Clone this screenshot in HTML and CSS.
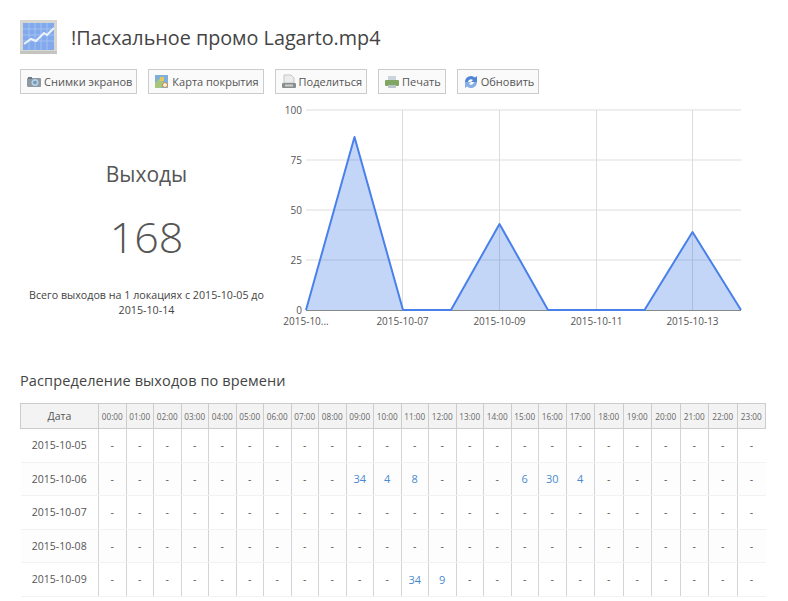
FILE: index.html
```html
<!DOCTYPE html>
<html lang="en">
<head>
    <meta charset="UTF-8">
    <meta name="viewport" content="width=device-width, initial-scale=1.0">
    <title>!Пасхальное промо Lagarto.mp4</title>
    <link rel="stylesheet" href="styles.css">
</head>
<body>
    <div class="title-row">
        <svg class="title-icon" width="37" height="34" viewBox="0 0 37 34">
            <rect x="0" y="0" width="37" height="34" fill="#d6d6d2"/>
            <rect x="3" y="3" width="31" height="27" fill="#82a9ec"/>
            <path d="M9 3V30M15 3V30M21 3V30M27 3V30M3 9H34M3 15H34M3 21H34" stroke="#a4c1f2" stroke-width="1" fill="none"/>
            <path d="M4 24L11 19L16 21L24 13L27 15L34 8" stroke="#eef3fb" stroke-width="2" fill="none"/>
            <rect x="0" y="31" width="37" height="3" fill="#c4c4c0"/>
        </svg>
        <h1 class="page-title">!Пасхальное промо Lagarto.mp4</h1>
    </div>

    <div class="toolbar">
        <button class="tool-btn" type="button">
            <svg width="16" height="16" viewBox="0 0 16 16"><rect x="1" y="4" width="14" height="9" rx="1" fill="#8d9aa4"/><rect x="2" y="3" width="4" height="2" fill="#6f7b84"/><circle cx="9" cy="8.500" r="3.500" fill="#b5cee2"/><circle cx="9" cy="8.500" r="1.800" fill="#6f98b9"/></svg>
            Снимки экранов
        </button>
        <button class="tool-btn" type="button">
            <svg width="16" height="16" viewBox="0 0 16 16"><rect x="1" y="1" width="13" height="13" fill="#7fb0dc"/><path d="M1 9L6 4L10 9L7 14H1Z" fill="#a8c67c"/><rect x="6" y="3" width="4" height="4" fill="#e4c65c"/><circle cx="11" cy="11" r="2.500" fill="#f4f0e0" stroke="#c98a3a" stroke-width="1"/></svg>
            Карта покрытия
        </button>
        <button class="tool-btn" type="button">
            <svg width="16" height="16" viewBox="0 0 16 16"><path d="M3 1H10L13 4V9H3Z" fill="#ececec" stroke="#c4c4c4" stroke-width="1"/><rect x="1" y="9" width="14" height="5" rx="1" fill="#8a8e8e"/><rect x="4" y="10.500" width="8" height="2" fill="#cfcfcf"/></svg>
            Поделиться
        </button>
        <button class="tool-btn" type="button">
            <svg width="16" height="16" viewBox="0 0 16 16"><rect x="4" y="2" width="8" height="5" fill="#c9d4dc"/><rect x="1" y="6" width="14" height="6" rx="1" fill="#7fa663"/><rect x="4" y="11" width="8" height="3" fill="#b8c4ca"/></svg>
            Печать
        </button>
        <button class="tool-btn" type="button">
            <svg width="16" height="16" viewBox="0 0 16 16"><path d="M2 8A6 6 0 0 1 12 3.500L14 2V8H8L10 6A3 3 0 0 0 5 8Z" fill="#4f86d6"/><path d="M14 8A6 6 0 0 1 4 12.500L2 14V8H8L6 10A3 3 0 0 0 11 8Z" fill="#86aee6"/></svg>
            Обновить
        </button>
    </div>

    <div class="summary">
        <div class="stat">
            <div class="stat-label">Выходы</div>
            <div class="stat-value">168</div>
            <p class="stat-note">Всего выходов на 1 локациях с 2015-10-05 до 2015-10-14</p>
        </div>
        <svg class="chart" width="492" height="240" viewBox="274 100 492 240">
            <g class="grid-h">
                <line x1="306" y1="110" x2="741" y2="110"/>
                <line x1="306" y1="160" x2="741" y2="160"/>
                <line x1="306" y1="210" x2="741" y2="210"/>
                <line x1="306" y1="260" x2="741" y2="260"/>
            </g>
            <g class="grid-v">
                <line x1="402.500" y1="110" x2="402.500" y2="310"/>
                <line x1="499.500" y1="110" x2="499.500" y2="310"/>
                <line x1="596.500" y1="110" x2="596.500" y2="310"/>
                <line x1="692.500" y1="110" x2="692.500" y2="310"/>
            </g>
            <path class="area" d="M306 310L354.500 137L403 310L451 310L499.500 224L548 310L644.500 310L692.500 232L741 310Z"/>
            <line class="baseline" x1="306" y1="310.500" x2="741" y2="310.500"/>
            <path class="line" d="M306 310L354.500 137L403 310L451 310L499.500 224L548 310L644.500 310L692.500 232L741 310"/>
            <g class="y-labels">
                <text x="302" y="113.500">100</text>
                <text x="302" y="163.500">75</text>
                <text x="302" y="213.500">50</text>
                <text x="302" y="263.500">25</text>
                <text x="302" y="313.500">0</text>
            </g>
            <g class="x-labels">
                <text x="306" y="325">2015-10...</text>
                <text x="402.500" y="325">2015-10-07</text>
                <text x="499.500" y="325">2015-10-09</text>
                <text x="596.500" y="325">2015-10-11</text>
                <text x="692.500" y="325">2015-10-13</text>
            </g>
        </svg>
    </div>

    <h2 class="section-title">Распределение выходов по времени</h2>

    <table class="hours">
        <thead>
            <tr>
                <th class="date-col">Дата</th>
                <th>00:00</th><th>01:00</th><th>02:00</th><th>03:00</th><th>04:00</th><th>05:00</th><th>06:00</th><th>07:00</th><th>08:00</th><th>09:00</th><th>10:00</th><th>11:00</th><th>12:00</th><th>13:00</th><th>14:00</th><th>15:00</th><th>16:00</th><th>17:00</th><th>18:00</th><th>19:00</th><th>20:00</th><th>21:00</th><th>22:00</th><th>23:00</th>
            </tr>
        </thead>
        <tbody>
            <tr>
                <td>2015-10-05</td>
                <td>-</td><td>-</td><td>-</td><td>-</td><td>-</td><td>-</td><td>-</td><td>-</td><td>-</td><td>-</td><td>-</td><td>-</td><td>-</td><td>-</td><td>-</td><td>-</td><td>-</td><td>-</td><td>-</td><td>-</td><td>-</td><td>-</td><td>-</td><td>-</td>
            </tr>
            <tr>
                <td>2015-10-06</td>
                <td>-</td><td>-</td><td>-</td><td>-</td><td>-</td><td>-</td><td>-</td><td>-</td><td>-</td><td class="val">34</td><td class="val">4</td><td class="val">8</td><td>-</td><td>-</td><td>-</td><td class="val">6</td><td class="val">30</td><td class="val">4</td><td>-</td><td>-</td><td>-</td><td>-</td><td>-</td><td>-</td>
            </tr>
            <tr>
                <td>2015-10-07</td>
                <td>-</td><td>-</td><td>-</td><td>-</td><td>-</td><td>-</td><td>-</td><td>-</td><td>-</td><td>-</td><td>-</td><td>-</td><td>-</td><td>-</td><td>-</td><td>-</td><td>-</td><td>-</td><td>-</td><td>-</td><td>-</td><td>-</td><td>-</td><td>-</td>
            </tr>
            <tr>
                <td>2015-10-08</td>
                <td>-</td><td>-</td><td>-</td><td>-</td><td>-</td><td>-</td><td>-</td><td>-</td><td>-</td><td>-</td><td>-</td><td>-</td><td>-</td><td>-</td><td>-</td><td>-</td><td>-</td><td>-</td><td>-</td><td>-</td><td>-</td><td>-</td><td>-</td><td>-</td>
            </tr>
            <tr>
                <td>2015-10-09</td>
                <td>-</td><td>-</td><td>-</td><td>-</td><td>-</td><td>-</td><td>-</td><td>-</td><td>-</td><td>-</td><td>-</td><td class="val">34</td><td class="val">9</td><td>-</td><td>-</td><td>-</td><td>-</td><td>-</td><td>-</td><td>-</td><td>-</td><td>-</td><td>-</td><td>-</td>
            </tr>
        </tbody>
    </table>
</body>
</html>
```

FILE: styles.css
```css
body {
    font-family: 'Open Sans', sans-serif;
    background-color: #fff;
    color: #555;
    margin: 0;
    padding: 20px 22px 0 20px;
    height: 581px;
    overflow: hidden;
}

.title-row {
    display: flex;
    align-items: center;
    height: 34px;
}

.title-icon {
    margin-right: 14px;
}

.page-title {
    margin: 0;
    font-size: 19.75px;
    font-weight: 400;
    color: #444;
}

.toolbar {
    display: flex;
    gap: 11px;
    margin-top: 15px;
}

.tool-btn {
    display: flex;
    align-items: center;
    gap: 2px;
    height: 25px;
    padding: 0 4px 0 5px;
    box-sizing: border-box;
    background-color: #fafafa;
    border: 1px solid #ccc;
    font-family: 'Open Sans', sans-serif;
    font-size: 11px;
    color: #555;
}

.summary {
    display: flex;
    height: 240px;
    margin-top: 6px;
}

.stat {
    width: 253px;
    text-align: center;
}

.stat-label {
    margin-top: 59px;
    font-size: 21px;
    line-height: 30px;
    color: #555;
}

.stat-value {
    margin-top: 18px;
    font-size: 43px;
    font-weight: 300;
    line-height: 60px;
    color: #555;
}

.stat-note {
    margin: 21px 0 0;
    font-size: 10.7px;
    line-height: 15px;
    color: #444;
}

.chart {
    display: block;
    margin-left: 1px;
}

.chart text {
    font-family: 'Open Sans', sans-serif;
    font-size: 10px;
    fill: #555;
}

.grid-h line {
    stroke: #e8e8e8;
    stroke-width: 1.5;
}

.grid-v line {
    stroke: #dcdcdc;
    stroke-width: 1;
}

.area {
    fill: #3b78e7;
    fill-opacity: 0.3;
}

.line {
    fill: none;
    stroke: #4a80ea;
    stroke-width: 2;
    stroke-linejoin: round;
}

.baseline {
    stroke: #888;
    stroke-width: 1;
}

.y-labels text {
    text-anchor: end;
}

.x-labels text {
    text-anchor: middle;
}

.section-title {
    margin: 31px 0 0;
    font-size: 14.5px;
    font-weight: 400;
    line-height: 20px;
    letter-spacing: 0.12px;
    color: #444;
}

.hours {
    width: 745px;
    margin-top: 12px;
    table-layout: fixed;
    border-collapse: collapse;
}

.hours th {
    width: 27.5px;
    height: 25px;
    padding: 0;
    background-color: #f3f3f3;
    border: 1px solid #ccc;
    font-size: 8.2px;
    font-weight: 400;
    color: #666;
    box-sizing: border-box;
}

/* 17:00 and later come out a bit wider */
.hours th:nth-child(n+19) {
    width: 28.5px;
}

.hours th.date-col {
    width: 78px;
    font-size: 10.5px;
    color: #555;
}

.hours td {
    height: 33.5px;
    padding: 0;
    box-sizing: border-box;
    text-align: center;
    font-size: 10.5px;
    color: #555;
    border-left: 1px solid #d4d4d4;
    border-right: 1px solid #d4d4d4;
    border-bottom: 1px solid #f2f2f2;
}

.hours td:first-child {
    border-left: none;
}

.hours td:last-child {
    border-right: none;
}

.hours td.val {
    font-size: 11px;
    color: #4a8bd0;
}

.hours tr:nth-child(even) td {
    background-color: #fdfdfd;
}
```
